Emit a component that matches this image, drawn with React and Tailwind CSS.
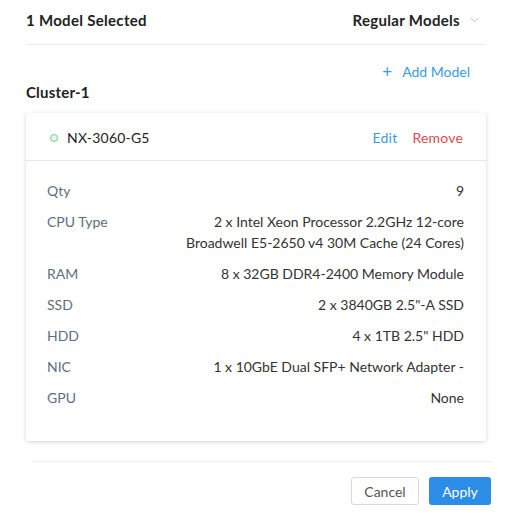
const specs = [
  { label: "Qty", value: ["9"] },
  {
    label: "CPU Type",
    value: [
      "2 x Intel Xeon Processor 2.2GHz 12-core",
      "Broadwell E5-2650 v4 30M Cache (24 Cores)",
    ],
  },
  { label: "RAM", value: ["8 x 32GB DDR4-2400 Memory Module"] },
  { label: "SSD", value: ['2 x 3840GB 2.5"-A SSD'] },
  { label: "HDD", value: ['4 x 1TB 2.5" HDD'] },
  { label: "NIC", value: ["1 x 10GbE Dual SFP+ Network Adapter -"] },
  { label: "GPU", value: ["None"] },
];

function App() {
  return (
    <div className="min-h-screen bg-white font-['Lato',sans-serif] text-[14px] text-[#333]">
      <div className="ml-[26px] w-[460px]">
        {/* ── Header ── */}
        <div className="flex items-center justify-between border-b border-[#ececec] pt-[10px] pb-[14px]">
          <span className="text-[15px] leading-5 font-bold tracking-[0.3px] text-[#222]">
            1 Model Selected
          </span>
          <button className="flex items-center gap-[10px] pr-[7px] text-[15px] leading-5 font-bold tracking-[0.3px] text-[#222]">
            Regular Models
            <svg width="9" height="6" viewBox="0 0 9 6" fill="none">
              <path d="M0.5 0.8 L4.5 4.8 L8.5 0.8" stroke="#b8bcc4" strokeWidth="1" />
            </svg>
          </button>
        </div>

        {/* ── Add model ── */}
        <div className="mt-[17px] flex justify-end pr-[16px]">
          <button className="flex items-center gap-[10px] leading-5 text-[#3a9be8]">
            <span className="text-[17px] leading-5">+</span>
            Add Model
          </button>
        </div>

        <h2 className="text-[15px] leading-5 font-bold tracking-[0.2px] text-[#222]">Cluster-1</h2>

        {/* ── Model card ── */}
        <div className="mt-[11px] rounded-[2px] bg-white shadow-[0_1px_4px_rgba(0,0,0,0.18)]">
          <div className="flex h-[48px] items-center justify-between border-b border-[#e8e8e8] pt-[2px] pr-[23px] pl-[24px]">
            <div className="flex items-center gap-[9px]">
              <span className="h-[8px] w-[8px] rounded-full border border-[#6fcf8c] bg-[#eafaef]" />
              <span className="text-[14px] tracking-[0.2px] text-[#222]">NX-3060-G5</span>
            </div>
            <div className="flex items-center gap-[15px] text-[14px] tracking-[0.2px]">
              <button className="text-[#3a9be8]">Edit</button>
              <button className="text-[#e0484e]">Remove</button>
            </div>
          </div>

          <div className="flex flex-col gap-[10px] pt-[19px] pr-[22px] pb-[33px] pl-[21px]">
            {specs.map((s) => (
              <div key={s.label} className="flex justify-between leading-[21px]">
                <span className="text-[#5f6d7e]">{s.label}</span>
                <div className="text-right text-[#333]">
                  {s.value.map((v) => (
                    <div key={v}>{v}</div>
                  ))}
                </div>
              </div>
            ))}
          </div>
        </div>
      </div>

      {/* ── Footer ── */}
      <div className="mt-[20px] ml-[32px] w-[460px] border-t border-[#efefef] pt-[15px]">
        <div className="flex justify-end gap-[10px] pr-[1px]">
          <button className="h-[28px] w-[68px] rounded-[3px] border border-[#d9d9d9] bg-white text-[14px] text-[#555]">
            Cancel
          </button>
          <button className="h-[28px] w-[62px] rounded-[3px] bg-[#2b8de6] text-[14px] text-white">
            Apply
          </button>
        </div>
      </div>
    </div>
  );
}

export default App;
